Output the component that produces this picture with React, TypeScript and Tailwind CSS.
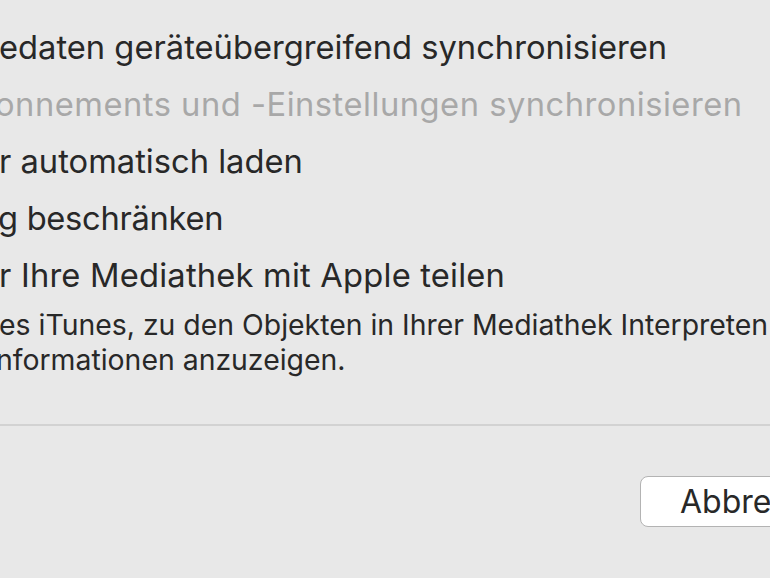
import React from "react";

export default function App() {
  const font = { fontFamily: "Inter, 'Noto Sans', sans-serif" };
  return (
    <div
      className="w-[770px] h-[578px] bg-[#e8e8e8] overflow-hidden flex flex-col text-[#282828]"
      style={font}
    >
      <div className="flex flex-col pt-[19px] whitespace-nowrap">
        <div className="h-[57px] text-[32.7px] leading-[57px] ml-[-1px]">edaten geräteübergreifend synchronisieren</div>
        <div className="h-[57px] text-[32.7px] leading-[57px] ml-[-5px] tracking-[0.5px] text-[#a8a8a8]">onnements und -Einstellungen synchronisieren</div>
        <div className="h-[57px] text-[32.7px] leading-[57px] ml-[-1px]">r automatisch laden</div>
        <div className="h-[57px] text-[32.7px] leading-[57px] ml-[-2px] tracking-[-0.3px]">g beschränken</div>
        <div className="h-[60px] text-[32.7px] leading-[57px] ml-[-1px] tracking-[0.2px]">r Ihre Mediathek mit Apple teilen</div>
        <div className="h-[35px] text-[28.4px] leading-[35px] ml-[-1px]">es iTunes, zu den Objekten in Ihrer Mediathek Interpreten</div>
        <div className="h-[35px] text-[28.4px] leading-[35px] ml-[-4px]">nformationen anzuzeigen.</div>
      </div>
      <div className="mt-[47px] h-[2px] bg-[#d2d2d2]" />
      <div className="flex justify-end pt-[50px]">
        <button
          className="w-[140px] h-[51px] mr-[-10px] bg-white border border-[#b3b3b3] rounded-[8px] text-[32px] text-left pl-[39px] text-[#282828] whitespace-nowrap overflow-hidden"
          style={font}
        >
          Abbrechen
        </button>
      </div>
    </div>
  );
}
